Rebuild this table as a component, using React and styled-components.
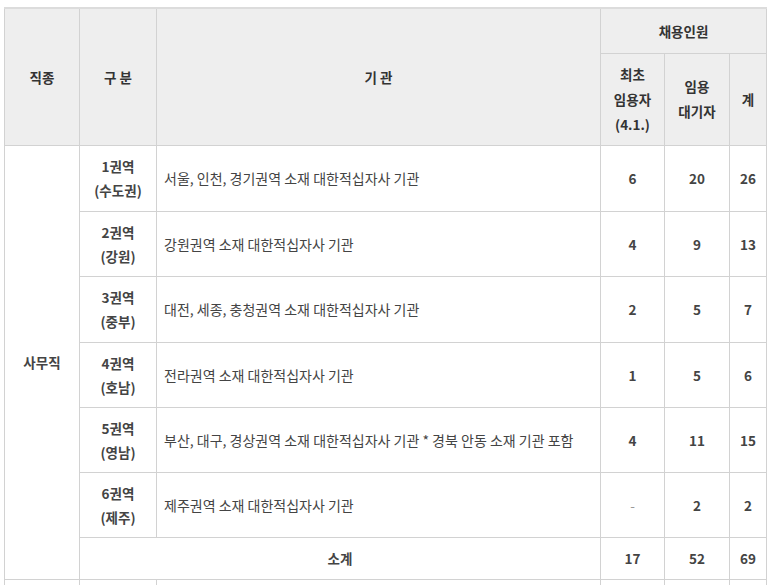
import React from "react";
import styled, { createGlobalStyle } from "styled-components";

const Global = createGlobalStyle`
  html, body {
    margin: 0;
    padding: 0;
    background: #fff;
  }
  body {
    font-family: "Noto Sans CJK KR", "Noto Sans", sans-serif;
    color: #333;
  }
`;

const Wrap = styled.div`
  padding: 7px 7px 0 4px;
`;

const Table = styled.table`
  width: 762px;
  border-collapse: collapse;
  table-layout: fixed;
  font-size: 14px;
  line-height: 24px;
  border-top: 2px solid #dcdcdc;
`;

const Th = styled.th`
  background: #eeeeee;
  border: 1px solid #d2d2d2;
  font-weight: 700;
  font-size: 13.5px;
  color: #333;
  text-align: center;
  vertical-align: middle;
  padding: 0 2px;
  line-height: ${({ lh }) => lh || "24px"};
`;

const Td = styled.td`
  border: 1px solid #d2d2d2;
  text-align: ${({ left }) => (left ? "left" : "center")};
  padding: ${({ left }) => (left ? "0 7px" : "0 2px")};
  font-weight: ${({ bold }) => (bold ? 700 : 400)};
  font-size: ${({ left }) => (left ? "14px" : "13.5px")};
  color: ${({ light }) => (light ? "#999" : "#444")};
  vertical-align: middle;
`;

const Row = styled.tr`
  height: ${({ h }) => h}px;
`;

const rows = [
  ["1권역", "(수도권)", "서울, 인천, 경기권역 소재 대한적십자사 기관", "6", "20", "26", 66],
  ["2권역", "(강원)", "강원권역 소재 대한적십자사 기관", "4", "9", "13", 65],
  ["3권역", "(중부)", "대전, 세종, 충청권역 소재 대한적십자사 기관", "2", "5", "7", 66],
  ["4권역", "(호남)", "전라권역 소재 대한적십자사 기관", "1", "5", "6", 65],
  ["5권역", "(영남)", "부산, 대구, 경상권역 소재 대한적십자사 기관 * 경북 안동 소재 기관 포함", "4", "11", "15", 65],
  ["6권역", "(제주)", "제주권역 소재 대한적십자사 기관", "-", "2", "2", 65],
];

export default function App() {
  return (
    <Wrap>
      <Global />
      <Table>
        <colgroup>
          <col style={{ width: 75 }} />
          <col style={{ width: 77 }} />
          <col style={{ width: 444 }} />
          <col style={{ width: 64 }} />
          <col style={{ width: 65 }} />
          <col style={{ width: 37 }} />
        </colgroup>
        <thead>
          <Row h={45}>
            <Th rowSpan={2}>직종</Th>
            <Th rowSpan={2}>구 분</Th>
            <Th rowSpan={2}>기 관</Th>
            <Th colSpan={3}>채용인원</Th>
          </Row>
          <Row h={92}>
            <Th lh="25px">최초<br />임용자<br />(4.1.)</Th>
            <Th lh="25px">임용<br />대기자</Th>
            <Th>계</Th>
          </Row>
        </thead>
        <tbody>
          {rows.map((r, i) => (
            <Row h={r[6]} key={r[0]}>
              {i === 0 && <Td bold rowSpan={7}>사무직</Td>}
              <Td bold>{r[0]}<br />{r[1]}</Td>
              <Td left>{r[2]}</Td>
              <Td bold={r[3] !== "-"} light={r[3] === "-"}>{r[3]}</Td>
              <Td bold>{r[4]}</Td>
              <Td bold>{r[5]}</Td>
            </Row>
          ))}
          <Row h={42}>
            <Td bold colSpan={2}>소계</Td>
            <Td bold>17</Td>
            <Td bold>52</Td>
            <Td bold>69</Td>
          </Row>
          <Row h={42}>
            <Td />
            <Td />
            <Td left />
            <Td />
            <Td />
            <Td />
          </Row>
        </tbody>
      </Table>
    </Wrap>
  );
}
